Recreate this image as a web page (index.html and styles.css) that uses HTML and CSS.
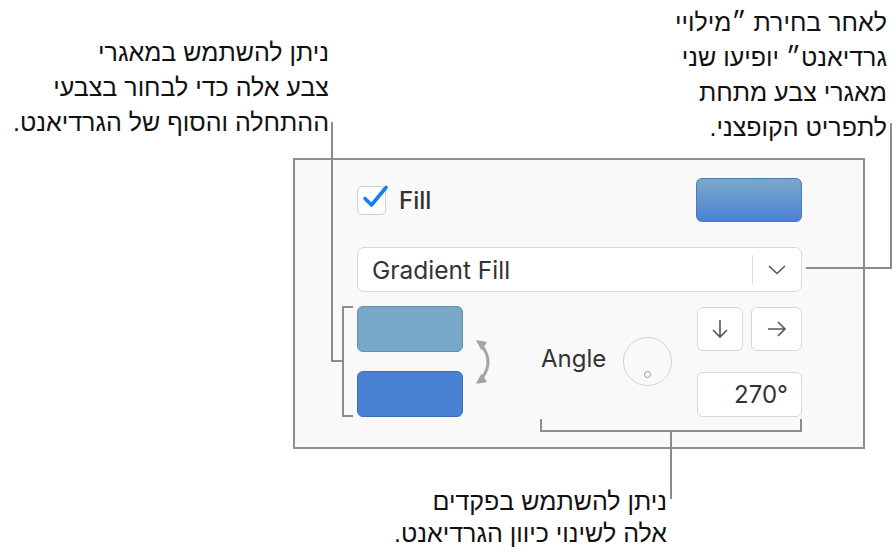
FILE: index.html
```html
<!DOCTYPE html>
<html lang="he">
<head>
    <meta charset="UTF-8">
    <meta name="viewport" content="width=device-width, initial-scale=1.0">
    <title>מילוי גרדיאנט</title>
    <link rel="stylesheet" href="styles.css">
</head>
<body>
    <div class="canvas">
        <p class="note note-left" dir="rtl">ניתן להשתמש במאגרי<br>צבע אלה כדי לבחור בצבעי<br>ההתחלה והסוף של הגרדיאנט.</p>
        <p class="note note-right" dir="rtl">לאחר בחירת ״מילויי<br>גרדיאנט״ יופיעו שני<br>מאגרי צבע מתחת<br>לתפריט הקופצני.</p>

        <section class="panel">
            <div class="fill-row">
                <label class="check">
                    <span class="check-box">
                        <svg width="30" height="30" viewBox="0 0 30 30"><path d="M5 15.5 L11.5 22 L26 4.5" fill="none" stroke="#1a7cf6" stroke-width="3.6" stroke-linecap="round" stroke-linejoin="round"/></svg>
                    </span>
                    Fill
                </label>
                <div class="swatch"></div>
            </div>

            <div class="select">
                <span class="select-text">Gradient Fill</span>
                <span class="select-btn">
                    <svg width="18" height="10" viewBox="0 0 18 10"><path d="M1 1 L9 8.5 L17 1" fill="none" stroke="#555" stroke-width="1.6"/></svg>
                </span>
            </div>

            <div class="gradient-row">
                <div class="wells">
                    <div class="well well-start"></div>
                    <div class="well well-end"></div>
                </div>
                <svg class="swap" width="20" height="48" viewBox="0 0 20 48">
                    <path d="M7 8 Q19 24 7 40" fill="none" stroke="#a5a5a5" stroke-width="3" stroke-linecap="round"/>
                    <path d="M2 3 L11 4.5 L6.5 11 Z" fill="#a5a5a5" stroke="#a5a5a5" stroke-width="1.5" stroke-linejoin="round"/>
                    <path d="M2 45 L11 43.5 L6.5 37 Z" fill="#a5a5a5" stroke="#a5a5a5" stroke-width="1.5" stroke-linejoin="round"/>
                </svg>
                <div class="angle">
                    <span class="angle-label">Angle</span>
                    <span class="knob"><span class="knob-dot"></span></span>
                </div>
                <div class="direction">
                    <button class="dir-btn">
                        <svg width="22" height="22" viewBox="0 0 22 22"><path d="M11 2 V19 M4 12 L11 19 L18 12" fill="none" stroke="#555" stroke-width="1.6"/></svg>
                    </button>
                    <button class="dir-btn">
                        <svg width="22" height="22" viewBox="0 0 22 22"><path d="M2 11 H19 M12 4 L19 11 L12 18" fill="none" stroke="#555" stroke-width="1.6"/></svg>
                    </button>
                    <div class="angle-field">270°</div>
                </div>
            </div>
        </section>

        <p class="note note-bottom" dir="rtl">ניתן להשתמש בפקדים<br>אלה לשינוי כיוון הגרדיאנט.</p>

        <!-- leader lines -->
        <div class="line line-left"></div>
        <div class="bracket bracket-wells"></div>
        <div class="line line-right"></div>
        <div class="bracket bracket-angle"></div>
        <div class="line line-bottom"></div>
    </div>
</body>
</html>
```

FILE: styles.css
```css
body {
    margin: 0;
    background-color: #fff;
    font-family: Inter, 'Liberation Sans', sans-serif;
    color: #333;
}
.canvas {
    position: relative;
    width: 896px;
    height: 553px;
    overflow: hidden;
}
.note {
    position: absolute;
    margin: 0;
    font-family: 'Liberation Sans', Arial, sans-serif;
    font-size: 25px;
    line-height: 35px;
    color: #111;
    text-align: right;
    white-space: nowrap;
}
.note-left {
    top: 35px;
    right: 567px;
}
.note-right {
    top: 5px;
    right: 9px;
}
.note-bottom {
    top: 485px;
    right: 229px;
    line-height: 32px;
}
.panel {
    box-sizing: border-box;
    margin: 158px 0 0 293px;
    width: 572px;
    height: 291px;
    padding: 18px 61px 0 62px;
    background-color: #f9f9f9;
    border: 2px solid #8f8f8f;
}
.fill-row {
    display: flex;
    align-items: center;
    justify-content: space-between;
    height: 44px;
}
.check {
    display: flex;
    align-items: center;
    gap: 13px;
    font-size: 24px;
    font-weight: 500;
    color: #333;
}
.check-box {
    box-sizing: border-box;
    width: 29px;
    height: 29px;
    background: #fff;
    border: 1px solid #cfcfcf;
    border-radius: 5px;
    position: relative;
}
.check-box svg {
    position: absolute;
    left: 2px;
    top: -4px;
}
.swatch {
    box-sizing: border-box;
    width: 106px;
    height: 44px;
    border-radius: 6px;
    border: 1px solid #4b79b9;
    background: linear-gradient(#7ca9c8, #4a80d5);
}
.select {
    box-sizing: border-box;
    display: flex;
    align-items: center;
    height: 45px;
    margin-top: 25px;
    background: #fff;
    border: 1px solid #d6d6d6;
    border-radius: 7px;
}
.select-text {
    flex: 1;
    padding-left: 14px;
    font-size: 24.5px;
    color: #333;
}
.select-btn {
    display: flex;
    align-items: center;
    justify-content: center;
    width: 48px;
    height: 29px;
    border-left: 1px solid #ddd;
}
.gradient-row {
    display: flex;
    align-items: center;
    margin-top: 14px;
}
.wells {
    display: flex;
    flex-direction: column;
    gap: 19px;
}
.well {
    box-sizing: border-box;
    width: 106px;
    height: 46px;
    border-radius: 6px;
}
.well-start {
    background: #78a8c7;
    border: 1px solid #6490ae;
}
.well-end {
    background: #4a80d4;
    border: 1px solid #3e6db8;
}
.swap {
    margin-left: 12px;
}
.angle {
    display: flex;
    align-items: center;
    gap: 17px;
    margin-left: 46px;
    font-size: 24px;
    color: #333;
}
.angle-label {
    margin-bottom: 6px;
}
.knob {
    box-sizing: border-box;
    position: relative;
    width: 49px;
    height: 49px;
    border: 1.5px solid #d3d3d3;
    border-radius: 50%;
    background: #fafafa;
}
.knob-dot {
    box-sizing: border-box;
    position: absolute;
    left: 20px;
    top: 33px;
    width: 7px;
    height: 7px;
    border: 1.5px solid #999;
    border-radius: 50%;
}
.direction {
    margin-left: auto;
    width: 105px;
    display: grid;
    grid-template-columns: 46px 1fr;
    gap: 21px 8px;
}
.dir-btn {
    box-sizing: border-box;
    display: flex;
    align-items: center;
    justify-content: center;
    height: 44px;
    padding: 0;
    background: #fff;
    border: 1px solid #d6d6d6;
    border-radius: 6px;
}
.angle-field {
    box-sizing: border-box;
    grid-column: 1 / -1;
    height: 45px;
    padding-right: 13px;
    background: #fff;
    border: 1px solid #d6d6d6;
    border-radius: 6px;
    font-size: 24px;
    line-height: 43px;
    text-align: right;
    color: #333;
}
.line,
.bracket {
    position: absolute;
    box-sizing: border-box;
    border-color: #8c8c8c;
    border-style: solid;
    border-width: 0;
}
.line-left {
    left: 331px;
    top: 122px;
    width: 13px;
    height: 240px;
    border-left-width: 2px;
    border-bottom-width: 2px;
}
.bracket-wells {
    left: 342px;
    top: 306px;
    width: 11px;
    height: 111px;
    border-width: 2px 0 2px 2px;
}
.line-right {
    left: 806px;
    top: 123px;
    width: 86px;
    height: 146px;
    border-right-width: 2px;
    border-bottom-width: 2px;
}
.bracket-angle {
    left: 540px;
    top: 419px;
    width: 262px;
    height: 13px;
    border-width: 0 2px 2px 2px;
}
.line-bottom {
    left: 670px;
    top: 430px;
    height: 69px;
    border-left-width: 2px;
}
```
